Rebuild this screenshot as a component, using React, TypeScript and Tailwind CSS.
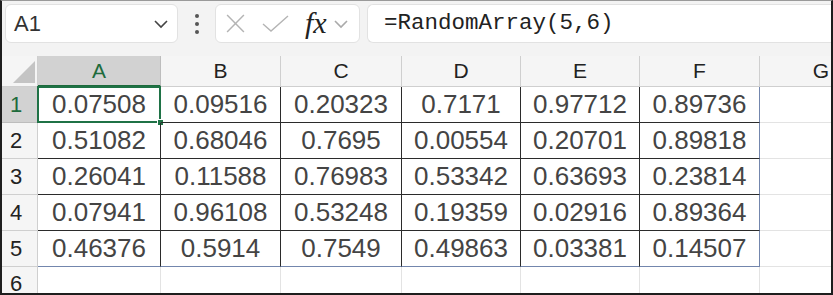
import React from 'react';

const cols = ['A', 'B', 'C', 'D', 'E', 'F'];

const data: string[][] = [
    ['0.07508', '0.09516', '0.20323', '0.7171', '0.97712', '0.89736'],
    ['0.51082', '0.68046', '0.7695', '0.00554', '0.20701', '0.89818'],
    ['0.26041', '0.11588', '0.76983', '0.53342', '0.63693', '0.23814'],
    ['0.07941', '0.96108', '0.53248', '0.19359', '0.02916', '0.89364'],
    ['0.46376', '0.5914', '0.7549', '0.49863', '0.03381', '0.14507'],
];

const Chevron = ({ className }: { className?: string }) => (
    <svg width="16" height="10" viewBox="0 0 16 10" className={className}>
        <path d="M2 2 L8 8 L14 2" fill="none" stroke="currentColor" strokeWidth="1.6" />
    </svg>
);

const App: React.FC = () => {
    return (
        <div className="w-[833px] h-[295px] overflow-hidden bg-[#f3f3f3] border-2 border-t border-[#1e1e1e] border-t-[#9a9a9a] flex flex-col" style={{ fontFamily: '"Liberation Sans", Arial, sans-serif' }}>
            {/* formula bar */}
            <div className="h-[55px] shrink-0 flex items-start pt-[3px] pl-[3px]">
                <div className="w-[173px] h-[39px] bg-white rounded-[6px] border border-[#e2e2e2] flex items-center justify-between pl-[8px] pr-[8px]">
                    <span className="text-[22px] text-[#333]">A1</span>
                    <Chevron className="text-[#444]" />
                </div>
                <div className="w-[37px] h-[39px] flex flex-col items-center justify-center gap-[4px]">
                    <span className="w-[4px] h-[4px] rounded-full bg-[#555]" />
                    <span className="w-[4px] h-[4px] rounded-full bg-[#555]" />
                    <span className="w-[4px] h-[4px] rounded-full bg-[#555]" />
                </div>
                <div className="w-[145px] h-[39px] bg-white rounded-[6px] border border-[#e2e2e2] flex items-center pl-[9px]">
                    <svg width="21" height="21" viewBox="0 0 20 20">
                        <path d="M2 2 L18 18 M18 2 L2 18" stroke="#b4b4b4" strokeWidth="1.4" />
                    </svg>
                    <svg width="30" height="20" viewBox="0 0 30 20" className="ml-[15px]">
                        <path d="M2 10 L10 17 L27 2" fill="none" stroke="#b4b4b4" strokeWidth="1.4" />
                    </svg>
                    <span className="ml-[14px] text-[30px] italic text-[#222] leading-none -mt-[2px]" style={{ fontFamily: '"Liberation Serif", "Times New Roman", serif' }}>fx</span>
                    <Chevron className="ml-[6px] text-[#aaa]" />
                </div>
                <div className="ml-[7px] flex-1 h-[39px] bg-white rounded-l-[6px] border border-r-0 border-[#e2e2e2] flex items-center pl-[16px]">
                    <span className="text-[22.5px] text-[#222]" style={{ fontFamily: '"Liberation Mono", "Courier New", monospace' }}>=RandomArray(5,6)</span>
                </div>
            </div>

            {/* grid */}
            <div className="flex-1 bg-white grid grid-cols-[36px_123px_120px_121px_119px_119px_120px_1fr] grid-rows-[31px_36px_36px_36px_36px_36px_1fr]">
                {/* header row */}
                <div className="bg-[#f5f5f5] border-r border-b border-[#cfcfcf] relative">
                    <div className="absolute right-[2px] bottom-[3px] w-0 h-0 border-l-[22px] border-l-transparent border-b-[22px] border-b-[#c4c4c4]" />
                </div>
                {cols.map((c) => (
                    <div
                        key={c}
                        className={`flex items-center justify-center text-[21px] border-r border-b ${c === 'A' ? 'bg-[#d2d2d2] text-[#1e6b3c] border-b-2 border-b-[#1e6b3c] border-r-[#bdbdbd]' : 'bg-[#f5f5f5] text-[#222] border-[#cfcfcf]'}`}
                    >
                        {c}
                    </div>
                ))}
                <div className="bg-[#f5f5f5] border-b border-[#cfcfcf] flex items-center justify-end pr-[2px] text-[21px] text-[#222]">G</div>

                {/* data rows */}
                {data.map((row, r) => (
                    <React.Fragment key={r}>
                        <div className={`flex items-center pl-[8px] text-[22px] border-r border-b ${r === 0 ? 'bg-[#d2d2d2] text-[#1e6b3c] border-[#bdbdbd]' : 'bg-[#f5f5f5] text-[#222] border-[#cfcfcf]'}`}>
                            {r + 1}
                        </div>
                        {row.map((v, c) => (
                            <div
                                key={c}
                                className={`relative flex items-center justify-center text-[26px] text-[#444] border-r border-b ${c === 5 ? 'border-r-[#7386ad]' : 'border-r-[#2b2b2b]'} ${r === 4 ? 'border-b-[#7386ad]' : 'border-b-[#2b2b2b]'}`}
                            >
                                {v}
                                {r === 0 && c === 0 && (
                                    <>
                                        <div className="absolute -left-px -top-px -right-px -bottom-px border-2 border-[#1f7246]" />
                                        <div className="absolute -right-[4px] -bottom-[4px] w-[7px] h-[7px] bg-[#1f7246] border border-white" />
                                    </>
                                )}
                            </div>
                        ))}
                        <div className="border-b border-[#e3e3e3]" />
                    </React.Fragment>
                ))}

                {/* row 6 */}
                <div className="bg-[#f5f5f5] border-r border-[#cfcfcf] flex items-center pl-[8px] text-[22px] text-[#222]">6</div>
                {cols.map((c) => (
                    <div key={c} className="border-r border-[#e3e3e3]" />
                ))}
                <div />
            </div>
        </div>
    );
};

export default App;
